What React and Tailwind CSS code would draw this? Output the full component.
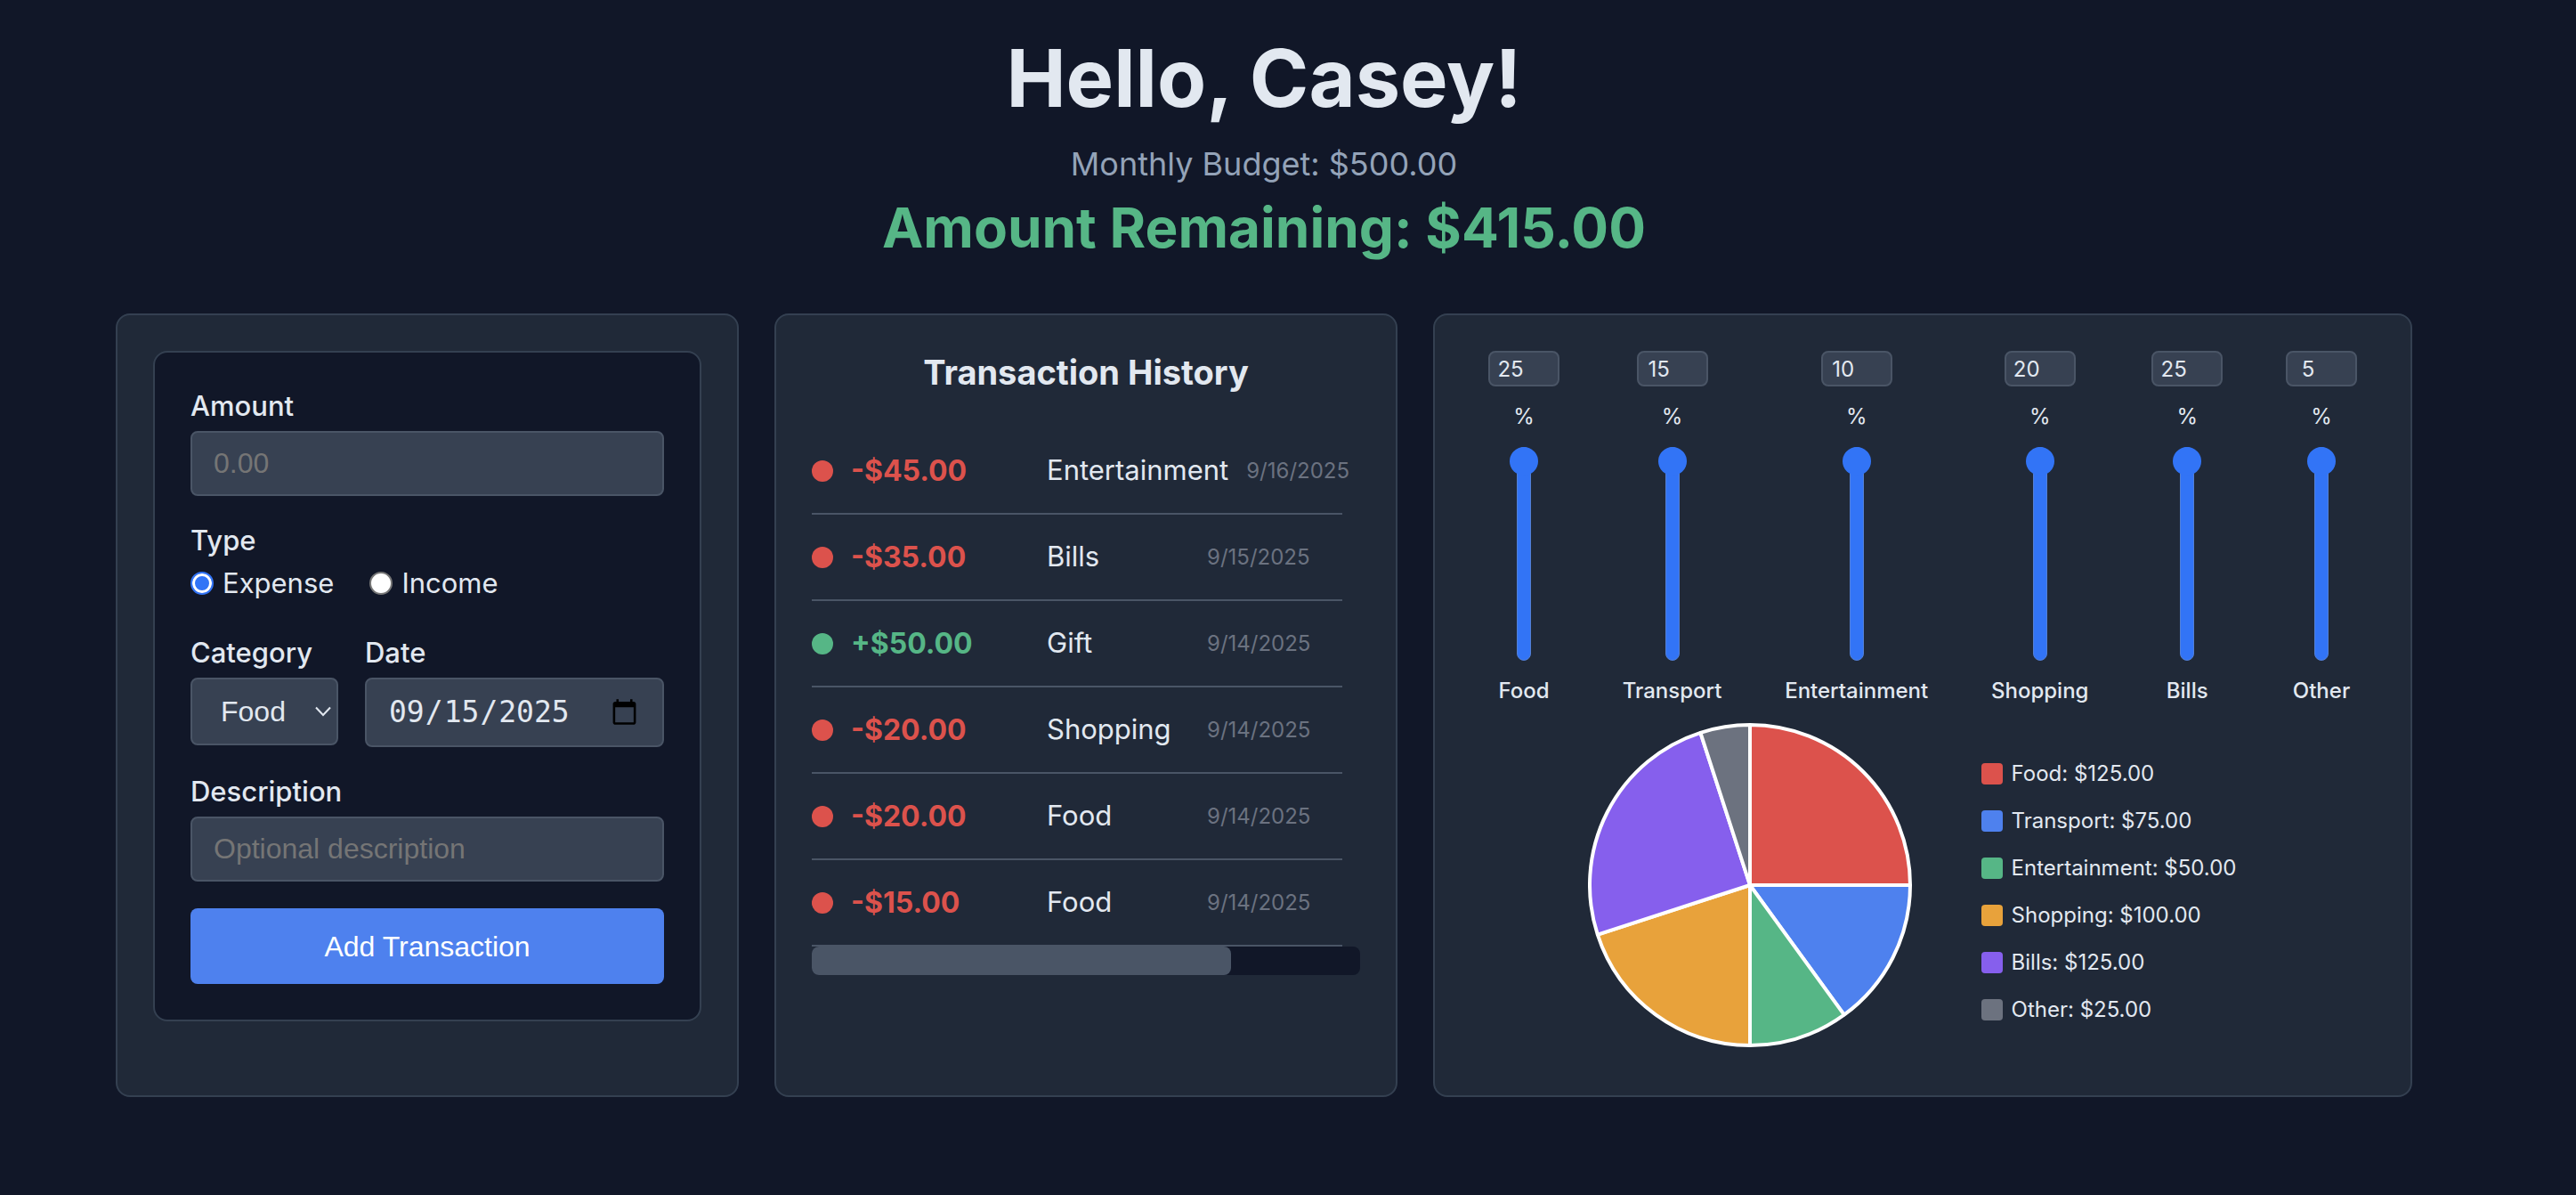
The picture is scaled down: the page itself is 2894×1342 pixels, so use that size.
import React, { useState } from "react";

const categories = [
  { name: "Food", percent: 25, amount: "$125.00", color: "#dc524c" },
  { name: "Transport", percent: 15, amount: "$75.00", color: "#4e81ee" },
  { name: "Entertainment", percent: 10, amount: "$50.00", color: "#56b686" },
  { name: "Shopping", percent: 20, amount: "$100.00", color: "#e8a23b" },
  { name: "Bills", percent: 25, amount: "$125.00", color: "#865fed" },
  { name: "Other", percent: 5, amount: "$25.00", color: "#6c727f" },
];

const transactions = [
  { amount: "-$45.00", category: "Entertainment", date: "9/16/2025" },
  { amount: "-$35.00", category: "Bills", date: "9/15/2025" },
  { amount: "+$50.00", category: "Gift", date: "9/14/2025" },
  { amount: "-$20.00", category: "Shopping", date: "9/14/2025" },
  { amount: "-$20.00", category: "Food", date: "9/14/2025" },
  { amount: "-$15.00", category: "Food", date: "9/14/2025" },
];

const cardClass = "min-w-0 rounded-2xl border-2 border-[#344051] bg-[#202938] p-10";
const labelClass = "mb-2 block text-[31px] leading-10 font-medium";
const fieldClass =
  "block w-full rounded-lg border-2 border-[#4a5566] bg-[#374152] text-[#e2e8f0]";
const arial = "text-[32px] font-['Liberation_Sans',Arial,sans-serif]";

function Header() {
  return (
    <header className="text-center">
      <h1 className="text-[90px] leading-[112px] font-bold">Hello, Casey!</h1>
      <p className="mt-4 text-[36px] leading-12 text-[#94a3b8]">Monthly Budget: $500.00</p>
      <p className="mt-2 text-[62px] leading-20 font-bold text-[#56b686]">
        Amount Remaining: $415.00
      </p>
    </header>
  );
}

function TypeOption({ value, label, defaultChecked }) {
  return (
    <label className="flex items-center gap-[10px] text-[31px] leading-10">
      <input
        type="radio"
        name="type"
        value={value}
        defaultChecked={defaultChecked}
        className="size-[26px] appearance-none rounded-full border-2 border-[#767676] bg-white checked:border-[#3274f6] checked:bg-[#3274f6] checked:shadow-[inset_0_0_0_3px_white]"
      />
      {label}
    </label>
  );
}

function TransactionForm() {
  return (
    <section className={cardClass}>
      <form
        className="rounded-2xl border-2 border-[#344051] bg-[#111728] p-10"
        onSubmit={(e) => e.preventDefault()}
      >
        <label htmlFor="amount" className={labelClass}>Amount</label>
        <input id="amount" inputMode="decimal" placeholder="0.00" className={`${fieldClass} ${arial} h-[73px] px-6 placeholder:text-[#757575]`} />

        <fieldset className="mt-[30px]">
          <legend className={labelClass}>Type</legend>
          <div className="flex gap-10">
            <TypeOption value="expense" label="Expense" defaultChecked />
            <TypeOption value="income" label="Income" />
          </div>
        </fieldset>

        <div className="mt-[38px] grid grid-cols-[166px_1fr] items-start gap-[30px]">
          <div>
            <label htmlFor="category" className={labelClass}>Category</label>
            <div className="relative">
              <select id="category" defaultValue="Food" className={`${fieldClass} ${arial} h-[76px] appearance-none pl-8`}>
                {categories.map((c) => (
                  <option key={c.name}>{c.name}</option>
                ))}
              </select>
              <svg viewBox="0 0 18 12" aria-hidden="true" className="pointer-events-none absolute top-8 right-2 h-3 w-[18px] fill-none stroke-[#e2e8f0] stroke-2">
                <path d="M1 1.5 9 10l8-8.500" />
              </svg>
            </div>
          </div>
          <div>
            <label htmlFor="date" className={labelClass}>Date</label>
            <input id="date" type="date" defaultValue="2025-09-15" className={`${fieldClass} h-[78px] px-6 text-[33px] font-['DejaVu_Sans_Mono',monospace]`} />
          </div>
        </div>

        <label htmlFor="description" className={`${labelClass} mt-[30px]`}>Description</label>
        <input id="description" placeholder="Optional description" className={`${fieldClass} ${arial} h-[73px] px-6 placeholder:text-[#757575]`} />

        <button type="submit" className={`${arial} mt-[30px] h-[85px] w-full rounded-lg bg-[#4e81ee] text-white`}>
          Add Transaction
        </button>
      </form>
    </section>
  );
}

function TransactionHistory() {
  return (
    <section className={cardClass}>
      <h2 className="text-center text-[38px] leading-12 font-bold">Transaction History</h2>
      <ul className="mt-[39px] mr-5">
        {transactions.map((t, i) => {
          const income = t.amount.startsWith("+");
          return (
            <li key={i} className="flex h-[97px] items-center gap-5 border-b-2 border-[#4a5566] text-[31px] whitespace-nowrap">
              <span className={`size-6 shrink-0 rounded-full ${income ? "bg-[#56b686]" : "bg-[#dc524c]"}`} />
              <span className={`w-[200px] shrink-0 text-[32px] font-bold ${income ? "text-[#56b686]" : "text-[#dc524c]"}`}>{t.amount}</span>
              <span className="min-w-[160px] shrink-0">{t.category}</span>
              <span className="shrink-0 text-[24px] text-[#6b7280]">{t.date}</span>
            </li>
          );
        })}
      </ul>
      <div className="h-8 rounded-lg bg-[#111728]">
        <div className="h-full w-[471px] rounded-lg bg-[#4a5566]" />
      </div>
    </section>
  );
}

function BudgetSlider({ name, percent }) {
  const [value, setValue] = useState(percent);
  const update = (e) => setValue(Number(e.target.value));
  return (
    <div className="flex flex-col items-center gap-4 text-[24px] leading-9">
      <input
        type="number"
        aria-label={`${name} percent`}
        value={value}
        onChange={update}
        className="h-10 w-20 appearance-none rounded-lg border-2 border-[#4a5566] bg-[#374152] pr-[30px] text-center [appearance:textfield] [&::-webkit-inner-spin-button]:appearance-none"
      />
      <span>%</span>
      <div className="relative flex h-60 w-8 justify-center">
        <div className="h-full w-4 rounded-full border border-[#5380d6] bg-[#3274f6]" />
        <input
          id={`slider-${name}`}
          type="range"
          min="0"
          max={percent}
          value={value}
          onChange={update}
          className="absolute inset-0 h-full w-full appearance-none bg-transparent [direction:rtl] [writing-mode:vertical-lr] [&::-webkit-slider-thumb]:size-8 [&::-webkit-slider-thumb]:appearance-none [&::-webkit-slider-thumb]:rounded-full [&::-webkit-slider-thumb]:bg-[#3274f6]"
        />
      </div>
      <label htmlFor={`slider-${name}`} className="font-medium">{name}</label>
    </div>
  );
}

function PieChart() {
  const point = (p) => {
    const a = (p / 100) * 2 * Math.PI;
    return `${182 + 180 * Math.sin(a)} ${182 - 180 * Math.cos(a)}`;
  };
  return (
    <svg viewBox="0 0 364 364" role="img" aria-label="Budget by category" className="size-[364px] stroke-white stroke-4">
      {categories.map((c, i) => {
        const start = categories.slice(0, i).reduce((sum, x) => sum + x.percent, 0);
        return (
          <path
            key={c.name}
            fill={c.color}
            strokeLinejoin="bevel"
            d={`M182 182 L${point(start)} A180 180 0 0 1 ${point(start + c.percent)} Z`}
          />
        );
      })}
    </svg>
  );
}

function BudgetPanel() {
  return (
    <section className={cardClass}>
      <div className="flex justify-between px-5">
        {categories.map((c) => (
          <BudgetSlider key={c.name} name={c.name} percent={c.percent} />
        ))}
      </div>
      <div className="mt-[18px] mb-[14px] flex items-center justify-center gap-[78px] pr-6">
        <PieChart />
        <ul className="flex flex-col gap-[17px] pt-[14px] text-[24px] leading-9">
          {categories.map((c) => (
            <li key={c.name} className="flex items-center gap-[10px]">
              <span className="size-6 rounded" style={{ backgroundColor: c.color }} />
              {c.name}: {c.amount}
            </li>
          ))}
        </ul>
      </div>
    </section>
  );
}

export default function App() {
  return (
    <div className="min-h-screen bg-[#111728] pt-8 pr-[184px] pb-[110px] pl-[130px] font-['Inter',sans-serif] text-[#e2e8f0]">
      <Header />
      <main className="mt-14 grid grid-cols-[7fr_7fr_11fr] gap-10">
        <TransactionForm />
        <TransactionHistory />
        <BudgetPanel />
      </main>
    </div>
  );
}
